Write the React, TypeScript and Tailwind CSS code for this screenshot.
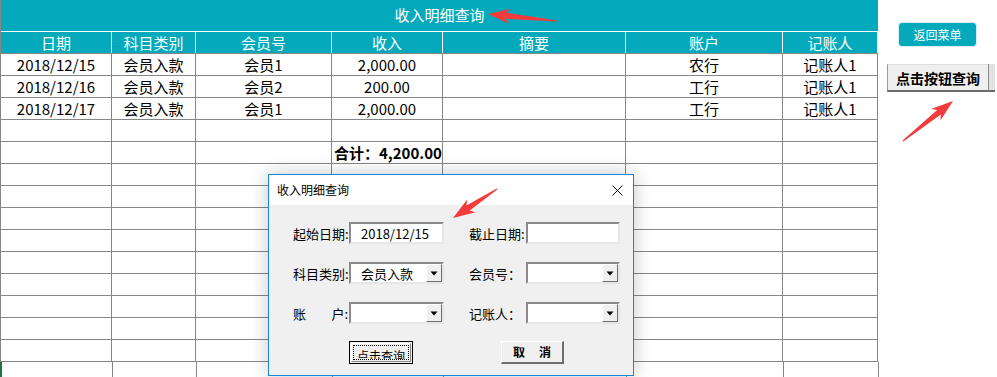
import React from "react";

const cols = "grid grid-cols-[111px_84px_136px_111px_183px_157px_95px]";
const headers = ["日期", "科目类别", "会员号", "收入", "摘要", "账户", "记账人"];

const rows = [
  ["2018/12/15", "会员入款", "会员1", "2,000.00", "", "农行", "记账人1"],
  ["2018/12/16", "会员入款", "会员2", "200.00", "", "工行", "记账人1"],
  ["2018/12/17", "会员入款", "会员1", "2,000.00", "", "工行", "记账人1"],
];

// arrow drawn as a tapered polygon from tail to tip
const arrow = (tx: number, ty: number, px: number, py: number, hl = 18, hw = 15, sw = 6) => {
  const len = Math.hypot(px - tx, py - ty);
  const ux = (px - tx) / len;
  const uy = (py - ty) / len;
  const nx = -uy;
  const ny = ux;
  const bx = px - ux * hl;
  const by = py - uy * hl;
  const cx = bx - ux * 4;
  const cy = by - uy * 4;
  const pts = [
    [tx + nx * 0.6, ty + ny * 0.6],
    [bx + (nx * sw) / 2, by + (ny * sw) / 2],
    [cx + (nx * hw) / 2, cy + (ny * hw) / 2],
    [px, py],
    [cx - (nx * hw) / 2, cy - (ny * hw) / 2],
    [bx - (nx * sw) / 2, by - (ny * sw) / 2],
    [tx - nx * 0.6, ty - ny * 0.6],
  ];
  return pts.map((p) => `${p[0].toFixed(1)},${p[1].toFixed(1)}`).join(" ");
};

const TextBox = ({ value }: { value?: string }) => (
  <div className="h-[22px] w-full bg-white border-2 border-t-[#8a8a8a] border-l-[#8a8a8a] border-b-[#e6e6e6] border-r-[#e6e6e6] flex items-center pl-[10px] text-[13px] leading-none">
    {value}
  </div>
);

const Combo = ({ value }: { value?: string }) => (
  <div className="h-[22px] w-full bg-white border-2 border-t-[#8a8a8a] border-l-[#8a8a8a] border-b-[#e6e6e6] border-r-[#e6e6e6] flex items-stretch text-[13px] leading-none">
    <div className="flex-1 flex items-center pl-[10px]">{value}</div>
    <div className="w-[16px] bg-[#f0f0f0] border border-t-white border-l-white border-b-[#6e6e6e] border-r-[#6e6e6e] flex items-center justify-center">
      <svg width="8" height="5" viewBox="0 0 8 5">
        <polygon points="0.5,0.5 7.5,0.5 4,4.5" fill="#000" />
      </svg>
    </div>
  </div>
);

const Label = ({ children }: { children: React.ReactNode }) => (
  <div className="w-[56px] text-[13px] leading-none flex items-center">{children}</div>
);

export default function App() {
  return (
    <div className="relative w-[997px] h-[377px] overflow-hidden bg-white text-black font-['Noto_Sans_CJK_SC','Noto_Sans',sans-serif]">
      <div className="flex">
        {/* sheet */}
        <div className="w-[878px] border-l border-[#868686]">
          <div className="h-[32px] bg-[#04aabc] border-b border-white flex items-center justify-center text-white text-[15px]">
            收入明细查询
          </div>
          <div className={`${cols} h-[22px] bg-[#04aabc] border-b border-[#868686]`}>
            {headers.map((h) => (
              <div key={h} className="border-r border-white flex items-center justify-center text-white text-[15px] leading-none">
                {h}
              </div>
            ))}
          </div>
          {rows.map((r, i) => (
            <div key={i} className={`${cols} h-[22px]`}>
              {r.map((c, j) => (
                <div key={j} className="border-r border-b border-[#868686] flex items-center justify-center text-[15px] leading-none">
                  {c}
                </div>
              ))}
            </div>
          ))}
          {Array.from({ length: 12 }).map((_, i) => (
            <div key={i} className={`${cols} h-[22px] ${i === 11 ? "border-l-2 border-l-[#217346] -ml-px" : ""}`}>
              {headers.map((h, j) => (
                <div key={h} className="border-r border-b border-[#868686] flex items-center text-[15px] leading-none font-bold">
                  {i === 1 && j === 3 ? <span className="pl-[2px]">合计：4,200.00</span> : null}
                </div>
              ))}
            </div>
          ))}
        </div>

        {/* floating buttons */}
        <div className="flex flex-col items-start pt-[22px]">
          <div className="ml-[20px] w-[79px] h-[25px] rounded-[4px] bg-[#04aabc] border border-[#d4eef1] flex items-center justify-center text-white text-[12px] leading-none">
            返回菜单
          </div>
          <div className="ml-[9px] mt-[17px] flex h-[28px]">
            <div className="w-[101px] bg-[#efefef] border-t border-l border-t-[#dcdcdc] border-l-[#9a9a9a] border-b-2 border-b-[#6a6a6a] flex items-center justify-center text-[14px] font-bold leading-none">
              点击按钮查询
            </div>
            <div className="w-[7px] bg-[#e2e2e2] border-l border-[#8a8a8a] border-b-2 border-b-[#6a6a6a]" />
          </div>
        </div>
      </div>

      {/* dialog */}
      <div className="absolute left-[268px] top-[174px] w-[366px] h-[202px] border border-[#1a84d6] bg-[#f0f0f0] shadow-[0_0_18px_rgba(0,0,0,0.22)] flex flex-col">
        <div className="h-[30px] bg-white flex items-center justify-between pl-[8px] pr-[10px] text-[12px] leading-none">
          <span>收入明细查询</span>
          <svg width="11" height="11" viewBox="0 0 11 11">
            <path d="M0.5 0.5 L10.5 10.5 M10.5 0.5 L0.5 10.5" stroke="#111" strokeWidth="1" />
          </svg>
        </div>
        <div className="flex flex-col pl-[24px] pt-[17px] gap-[18px]">
          <div className="flex h-[22px]">
            <Label>起始日期:</Label>
            <div className="w-[95px]"><TextBox value="2018/12/15" /></div>
            <div className="ml-[25px] w-[57px] flex items-center text-[13px] leading-none">截止日期:</div>
            <div className="w-[94px]"><TextBox /></div>
          </div>
          <div className="flex h-[22px]">
            <Label>科目类别:</Label>
            <div className="w-[95px]"><Combo value="会员入款" /></div>
            <div className="ml-[25px] w-[57px] flex items-center text-[13px] leading-none">会员号：</div>
            <div className="w-[94px]"><Combo /></div>
          </div>
          <div className="flex h-[22px]">
            <Label>
              <span className="flex w-full justify-between pr-[1px]">
                <span>账</span>
                <span>户:</span>
              </span>
            </Label>
            <div className="w-[95px]"><Combo /></div>
            <div className="ml-[25px] w-[57px] flex items-center text-[13px] leading-none">记账人：</div>
            <div className="w-[94px]"><Combo /></div>
          </div>
        </div>
        <div className="flex pl-[80px] pt-[17px]">
          <div className="w-[64px] h-[23px] border border-black bg-[#f0f0f0] p-[1px]">
            <div className="h-full border border-t-white border-l-white border-b-[#8a8a8a] border-r-[#8a8a8a] p-[1px]">
              <div className="h-full border border-dotted border-black overflow-hidden flex justify-center">
                <span className="pt-[4px] text-[12px] leading-none">点击查询</span>
              </div>
            </div>
          </div>
          <div className="ml-[88px] w-[63px] h-[23px] bg-[#f0f0f0] border border-t-white border-l-white border-b-2 border-r-2 border-b-[#6e6e6e] border-r-[#6e6e6e] flex items-center justify-center gap-[14px] text-[12px] font-semibold leading-none">
            <span>取</span>
            <span>消</span>
          </div>
        </div>
      </div>

      {/* annotation arrows */}
      <svg className="absolute inset-0 pointer-events-none" width="997" height="377">
        <polygon points={arrow(557, 21, 488, 14)} fill="#f23b3b" />
        <polygon points={arrow(497, 189, 453, 218)} fill="#f23b3b" />
        <polygon points={arrow(903, 141, 953, 101)} fill="#f23b3b" />
      </svg>
    </div>
  );
}
